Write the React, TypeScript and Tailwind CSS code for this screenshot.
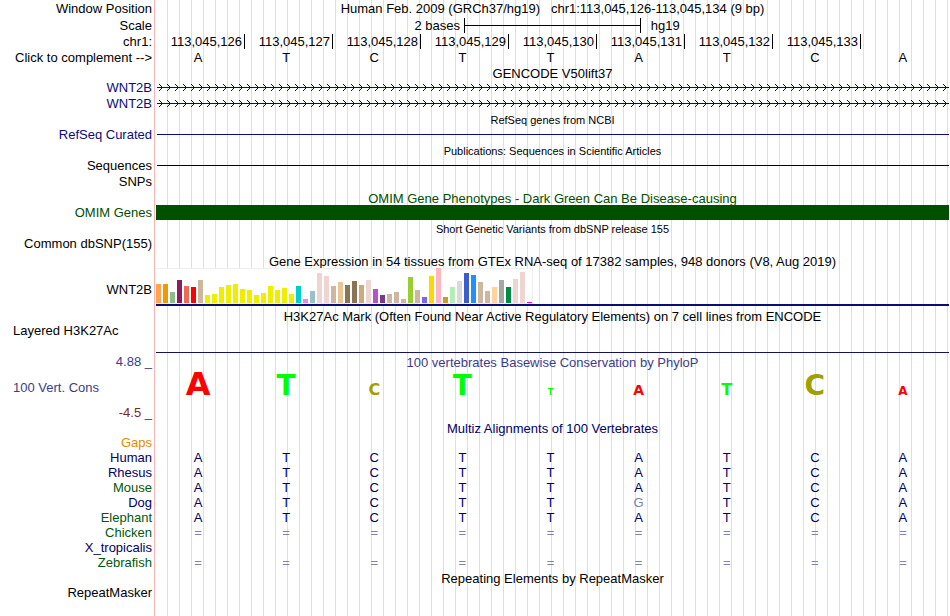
import type { ReactNode } from "react";
import { clsx } from "clsx";

type Bar = [height: number, color: string];

const START = 113045126;
const BASES = ["A", "T", "C", "T", "T", "A", "T", "C", "A"];

const GAPPED = BASES.map(() => "=");
const DOG = ["A", "T", "C", "T", "T", "G", "T", "C", "A"];

const SPECIES = [
  { name: "Gaps", color: "text-[#e68a00]", cells: [] as string[] },
  { name: "Human", color: "text-[#000064]", cells: BASES },
  { name: "Rhesus", color: "text-[#000064]", cells: BASES },
  { name: "Mouse", color: "text-[#005a0a]", cells: BASES },
  { name: "Dog", color: "text-[#000064]", cells: DOG },
  { name: "Elephant", color: "text-[#005a0a]", cells: BASES },
  { name: "Chicken", color: "text-[#005a0a]", cells: GAPPED },
  { name: "X_tropicalis", color: "text-[#000064]", cells: [] },
  { name: "Zebrafish", color: "text-[#005a0a]", cells: GAPPED },
];

// one bar per GTEx tissue
const EXPRESSION: Bar[] = [
  [19, "#ffa54f"], [19, "#ee9a00"], [11, "#8fbc8f"], [23, "#8b1c62"], [17, "#ee6a50"], [16, "#ff0000"],
  [23, "#cdb79e"], [8, "#eeee00"], [9, "#eeee00"], [16, "#eeee00"], [18, "#eeee00"], [19, "#eeee00"],
  [14, "#eeee00"], [13, "#eeee00"], [8, "#eeee00"], [10, "#eeee00"], [17, "#eeee00"], [13, "#eeee00"],
  [15, "#eeee00"], [9, "#eeee00"], [17, "#00cdcd"], [4, "#ee82ee"], [12, "#9ac0cd"], [30, "#eed5d2"],
  [27, "#eed5d2"], [17, "#cdb79e"], [21, "#eec591"], [18, "#8b7355"], [22, "#8b7355"], [18, "#cdaa7d"],
  [23, "#eed5d2"], [14, "#b452cd"], [8, "#7a378b"], [9, "#cdb79e"], [11, "#cdb79e"], [4, "#cdb79e"],
  [26, "#9acd32"], [13, "#cdb79e"], [6, "#7a67ee"], [27, "#ffd700"], [35, "#ffb6c1"], [6, "#cd9b1d"],
  [16, "#b4eeb4"], [22, "#d9d9d9"], [30, "#3a5fcd"], [28, "#1e90ff"], [21, "#cdb79e"], [12, "#cdb79e"],
  [16, "#ffd39b"], [23, "#a6a6a6"], [16, "#008b45"], [24, "#eed5d2"], [31, "#eed5d2"], [1, "#ff00ff"],
];

const CONSERVATION = [
  { base: "A", className: "text-[32px] text-[#ff0000]" },
  { base: "T", className: "text-[28px] text-[#00ff00]" },
  { base: "C", className: "text-[16px] text-[#a0a000]" },
  { base: "T", className: "text-[28px] text-[#00ff00]" },
  { base: "T", className: "text-[8px] text-[#00ff00]" },
  { base: "A", className: "text-[14px] text-[#ff0000]" },
  { base: "T", className: "text-[16px] text-[#00ff00]" },
  { base: "C", className: "text-[28px] text-[#a0a000]" },
  { base: "A", className: "text-[12px] text-[#ff0000]" },
];

interface RowProps {
  label?: ReactNode;
  className?: string;
  labelClass?: string;
  children?: ReactNode;
}

const Row = ({ label, className = "h-4 items-start", labelClass = "text-black", children }: RowProps) => (
  <div className={clsx("grid grid-cols-[156px_1fr]", className)}>
    <div className={clsx("flex min-h-[15px] items-center justify-end pr-1", labelClass)}>{label}</div>
    <div className="flex min-h-[15px] min-w-0 items-center">{children}</div>
  </div>
);

interface TitleProps {
  children: ReactNode;
  className?: string;
}

const Title = ({ children, className = "h-[15px] text-[13px] text-black" }: TitleProps) => (
  <h2 className={clsx("flex items-end justify-center pl-[156px] leading-[13px] whitespace-nowrap", className)}>
    {children}
  </h2>
);

const Transcript = ({ id }: { id: string }) => (
  <svg className="ml-px h-4 w-full" shapeRendering="crispEdges" aria-hidden="true">
    <defs>
      <pattern id={id} width="8" height="16" patternUnits="userSpaceOnUse">
        <path d="M2 4h1v1h-1zM3 5h1v1h-1zM4 6h1v1h-1zM5 7h1v1h-1zM4 8h1v1h-1zM3 9h1v1h-1zM2 10h1v1h-1z" fill="#0c0c78" />
      </pattern>
    </defs>
    <rect width="100%" height="16" fill={`url(#${id})`} />
    <rect y="7" width="100%" height="1" fill="#0c0c78" />
  </svg>
);

const App = () => {
  return (
    <main className="min-h-screen bg-white bg-[linear-gradient(90deg,#fff_154px,#ffb4b4_154px,#ffb4b4_155px,#fff_155px,#fff_157px,transparent_157px),repeating-linear-gradient(90deg,transparent_0,transparent_11px,#dcdcf5_11px,#dcdcf5_12px)] pr-px font-['Liberation_Sans',Arial,sans-serif] text-[13px] leading-[15px] text-black">
      <Row label="Window Position" className="h-[17px]">
        <h1 className="w-full text-center whitespace-pre">
          {"Human Feb. 2009 (GRCh37/hg19)   chr1:113,045,126-113,045,134 (9 bp)"}
        </h1>
      </Row>
      <Row label="Scale" className="h-[17px]">
        <div className="w-[38.84%] pr-1 text-right">2 bases</div>
        <div className="flex h-[15px] w-[22.3%] items-center border-x border-black">
          <div className="h-px w-full bg-black" />
        </div>
        <div className="pl-2.5">hg19</div>
      </Row>
      <Row label="chr1:">
        <div className="ml-px grid w-full grid-cols-9">
          {BASES.map((_, i) => (
            <div key={i} className={clsx("h-[15px] pr-0.5 text-right", i < 8 && "border-r border-black")}>
              {i < 8 && (START + i).toLocaleString("en-US")}
            </div>
          ))}
        </div>
      </Row>
      <Row label="Click to complement -->" className="h-[15px]">
        <div className="grid w-full grid-cols-9 text-center">
          {BASES.map((base, i) => (
            <span key={i} className="pr-1 leading-[13px]">{base}</span>
          ))}
        </div>
      </Row>

      <Title>GENCODE V50lift37</Title>
      <Row label="WNT2B" labelClass="text-[#0c0c78]">
        <Transcript id="transcript-1" />
      </Row>
      <Row label="WNT2B" labelClass="text-[#0c0c78]">
        <Transcript id="transcript-2" />
      </Row>

      <Title className="h-[15px] text-[11px]">RefSeq genes from NCBI</Title>
      <Row label="RefSeq Curated" labelClass="text-[#0c0c78]">
        <div className="ml-px h-px w-full bg-[#0c0c78]" />
      </Row>

      <Title className="h-[15px] text-[11px]">Publications: Sequences in Scientific Articles</Title>
      <Row label="Sequences">
        <div className="ml-px h-px w-full bg-black" />
      </Row>
      <Row label="SNPs" />

      <Title className="h-[15px] text-[13px] text-[#005000]">
        OMIM Gene Phenotypes - Dark Green Can Be Disease-causing
      </Title>
      <Row label="OMIM Genes" className="h-[15px]" labelClass="text-[#005000]">
        <div className="h-[15px] w-full bg-[#005000]" />
      </Row>

      <Title className="h-4 text-[11px]">Short Genetic Variants from dbSNP release 155</Title>
      <Row label="Common dbSNP(155)" />

      <Title className="h-4 text-[13px]">
        Gene Expression in 54 tissues from GTEx RNA-seq of 17382 samples, 948 donors (V8, Aug 2019)
      </Title>
      <Row label="WNT2B" className="h-[38px]" labelClass="pt-1">
        <div className="flex h-[38px] w-full flex-col items-start">
          <div className="flex h-9 items-end gap-0.5 border-y border-r border-[#eeeeee] bg-white">
            {EXPRESSION.map(([height, color], i) => (
              <div key={i} className="w-[5px]" style={{ height, backgroundColor: color }} />
            ))}
          </div>
          <div className="h-0.5 w-full bg-[#0c0c78]" />
        </div>
      </Row>

      <Title className="h-[17px] text-[13px]">
        H3K27Ac Mark (Often Found Near Active Regulatory Elements) on 7 cell lines from ENCODE
      </Title>
      <div className="grid h-[30px] grid-cols-[156px_1fr]">
        <div className="pl-[13px]">Layered H3K27Ac</div>
        <div className="border-b border-[#14145a]" />
      </div>

      <section className="grid h-[67px] grid-cols-[156px_1fr] pt-px text-[#3c3c8c]">
        <div className="flex flex-col justify-between pr-1">
          <span className="text-right">4.88 _</span>
          <span className="pl-[13px]">100 Vert. Cons</span>
          <span className="text-right text-[#782828]">-4.5 _</span>
        </div>
        <div>
          <h2 className="pt-px text-center">100 vertebrates Basewise Conservation by PhyloP</h2>
          <div className="grid h-7 grid-cols-9 items-baseline-last text-center font-['DejaVu_Sans',sans-serif] font-bold">
            {CONSERVATION.map(({ base, className }, i) => (
              <span key={i} className={clsx("pr-1 leading-7", className)}>{base}</span>
            ))}
          </div>
        </div>
      </section>

      <Title className="h-[15px] text-[13px] text-[#000064]">Multiz Alignments of 100 Vertebrates</Title>
      <table className="w-full table-fixed border-collapse text-[#000064]">
        <colgroup>
          <col className="w-[156px]" />
          {BASES.map((_, i) => (
            <col key={i} />
          ))}
        </colgroup>
        <tbody>
          {SPECIES.map(({ name, color, cells }) => (
            <tr key={name} className="h-[15px]">
              <th scope="row" className={clsx("p-0 pr-1 text-right font-normal", color)}>{name}</th>
              {BASES.map((base, i) => (
                <td
                  key={i}
                  className={clsx("p-0 pr-1 text-center", cells[i] !== base && "text-[#8080b2]")}
                >
                  {cells[i]}
                </td>
              ))}
            </tr>
          ))}
        </tbody>
      </table>

      <Title>Repeating Elements by RepeatMasker</Title>
      <Row label="RepeatMasker" className="h-[15px]" />
    </main>
  );
};

export default App;
